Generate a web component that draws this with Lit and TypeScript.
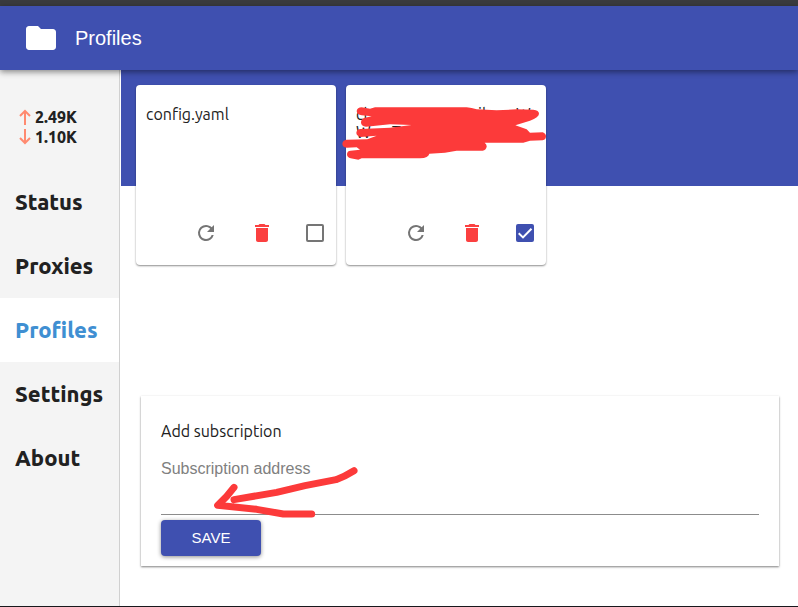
import { LitElement, html, css, svg } from "lit";
import { customElement, property, state } from "lit/decorators.js";
import { classMap } from "lit/directives/class-map.js";

const folderIcon = svg`<path d="M10 4H4C2.9 4 2 4.9 2 6V18C2 19.100 2.900 20 4 20H20C21.100 20 22 19.100 22 18V8C22 6.900 21.100 6 20 6H12L10 4Z"/>`;
const refreshIcon = svg`<path d="M17.650 6.350C16.200 4.900 14.210 4 12 4A8 8 0 1 0 19.730 14H17.650A6 6 0 1 1 12 6C13.660 6 15.140 6.690 16.220 7.780L13 11H20V4L17.650 6.350Z"/>`;
const trashIcon = svg`<path d="M6 19C6 20.100 6.900 21 8 21H16C17.100 21 18 20.100 18 19V7H6V19ZM19 4H15.500L14.500 3H9.500L8.500 4H5V6H19V4Z"/>`;

interface Profile {
  name: string;
  selected: boolean;
  hidden: boolean;
}

@customElement("profile-card")
export class ProfileCard extends LitElement {
  @property() name = "";
  @property({ type: Boolean }) selected = false;
  @property({ type: Boolean }) redacted = false;

  static styles = css`
    :host {
      display: flex;
      flex-direction: column;
      justify-content: space-between;
      position: relative;
      box-sizing: border-box;
      width: 200px;
      height: 180px;
      background: #fff;
      border-radius: 4px;
      box-shadow: 0 1px 2px rgba(0, 0, 0, 0.45);
    }
    .name {
      padding: 20px 10px 0;
      font-size: 16px;
      line-height: 18px;
    }
    .row {
      display: grid;
      grid-template-columns: 36px 86px 1fr 20px;
    }
    .actions {
      display: flex;
      align-items: center;
      justify-content: flex-end;
      gap: 32px;
      height: 24px;
      padding: 0 12px 20px;
    }
    button {
      display: flex;
      padding: 0;
      border: 0;
      background: none;
      color: #757575;
      cursor: pointer;
    }
    button svg {
      width: 24px;
      height: 24px;
      fill: currentColor;
    }
    .delete {
      color: #fb4040;
    }
    input {
      appearance: none;
      box-sizing: border-box;
      width: 18px;
      height: 18px;
      margin: 0;
      border: 2px solid #757575;
      border-radius: 2px;
    }
    .pick {
      display: grid;
      place-items: center;
      width: 18px;
    }
    .pick > * {
      grid-area: 1 / 1;
    }
    input:checked {
      border-color: #3f50b0;
      background: #3f50b0;
    }
    .tick {
      width: 18px;
      height: 18px;
      fill: none;
      stroke: #fff;
      stroke-width: 2;
      pointer-events: none;
    }
    .scribble {
      position: absolute;
      left: -16px;
      top: -10px;
      width: 230px;
      height: 110px;
      fill: #fc3a3a;
      pointer-events: none;
    }
  `;

  render() {
    return html`
      <div class="name">
        ${this.redacted
          ? html`<div class="row"><span>cl</span><span></span><span>il</span><span>W</span></div>
              <div class="row"><span>W</span><span>T</span></div>`
          : this.name}
      </div>
      <div class="actions">
        <button aria-label="Refresh"><svg viewBox="0 0 24 24">${refreshIcon}</svg></button>
        <button class="delete" aria-label="Delete"><svg viewBox="0 0 24 24">${trashIcon}</svg></button>
        <label class="pick">
          <input type="checkbox" aria-label="Use profile" .checked=${this.selected} />
          ${this.selected
            ? html`<svg class="tick" viewBox="0 0 18 18"><path d="M2.700 9.300 7 13.400 15.500 4.800" /></svg>`
            : null}
        </label>
      </div>
      ${this.redacted
        ? html`<svg class="scribble" viewBox="0 0 690 330">
            <path
              d="M80 108Q82 97 95 97L120 101 135 97H410Q425 98 440 103L500 106 560 103 610 104Q627 106 627 116Q627 126 600 137L556 151 590 163 600 173 638 172Q648 176 648 184Q648 194 638 196L600 197 580 203H464Q471 209 470 215Q468 225 458 227L380 227 345 233 298 236Q296 248 270 250L95 250 85 254 62 250Q51 247 51 238Q51 228 62 227L90 224 80 217 50 218Q37 216 37 206Q38 195 50 194L112 193 140 182 92 186Q79 182 79 173Q80 163 92 162L180 158 245 150 180 148 108 155Q94 153 93 143Q93 133 102 129L125 124 95 121Q81 119 80 108Z"
            />
          </svg>`
        : null}
    `;
  }
}

@customElement("app-root")
export class AppRoot extends LitElement {
  @state() page = "Profiles";
  @state() profiles: Profile[] = [
    { name: "config.yaml", selected: false, hidden: false },
    { name: "", selected: true, hidden: true },
  ];

  static styles = css`
    :host {
      display: flex;
      flex-direction: column;
      box-sizing: border-box;
      min-height: 100vh;
      border-top: 6px solid #3a3b3e;
      border-bottom: 1px solid #18181c;
      background: #fff;
      color: #212121;
      font-family: Ubuntu, "Noto Sans", sans-serif;
      font-size: 16px;
    }
    header {
      display: flex;
      align-items: center;
      gap: 16px;
      height: 64px;
      padding: 0 23px;
      background: #3f50b0;
      color: #fff;
      box-shadow: 0 2px 6px rgba(0, 0, 0, 0.45);
      z-index: 1;
    }
    header svg {
      width: 36px;
      height: 36px;
      fill: #fff;
    }
    h1 {
      margin: 0;
      font: 20px/24px "Liberation Sans", Arial, sans-serif;
    }
    .body {
      display: flex;
      flex: 1;
    }
    aside {
      flex: none;
      width: 119px;
      border-right: 1px solid #d0d0d0;
      background: #f4f4f4;
    }
    .traffic {
      padding: 37px 0 23px 19px;
      font-size: 16px;
      font-weight: 800;
      line-height: 20px;
    }
    .traffic div {
      display: flex;
      align-items: center;
      gap: 4px;
    }
    .traffic svg {
      width: 12px;
      height: 16px;
      fill: none;
      stroke: #ff8a70;
      stroke-width: 2;
    }
    nav a {
      display: block;
      padding-left: 15px;
      color: #212121;
      font-size: 22px;
      font-weight: 800;
      line-height: 64px;
      text-decoration: none;
    }
    nav a.active {
      background: #fff;
      color: #3f8fd2;
    }
    main {
      display: flex;
      flex: 1;
      flex-direction: column;
      gap: 20px;
      margin-left: 1px;
      background: linear-gradient(#3f50b0 116px, #fff 116px);
    }
    .cards {
      display: flex;
      flex-wrap: wrap;
      gap: 10px;
      padding: 15px;
    }
    form {
      position: relative;
      margin: auto 19px 40px 20px;
      padding: 20px 20px 10px;
      background: #fff;
      box-shadow: 0 1px 2px rgba(0, 0, 0, 0.5);
    }
    label {
      display: block;
      line-height: 30px;
    }
    input {
      display: block;
      box-sizing: border-box;
      width: 100%;
      height: 69px;
      margin: 0 0 5px;
      padding: 0 0 22px;
      border: 0;
      border-bottom: 1px solid #8c8c8c;
      border-radius: 0;
      background: none;
      font: 16px "Liberation Sans", Arial, sans-serif;
      outline: none;
    }
    input::placeholder {
      color: #808080;
    }
    form button {
      display: block;
      width: 100px;
      height: 36px;
      padding: 0 0 2px;
      border: 0;
      border-radius: 4px;
      background: #3f50b0;
      color: #fff;
      box-shadow: 0 1px 4px rgba(0, 0, 0, 0.45);
      font: 15px "Liberation Sans", Arial, sans-serif;
    }
    .arrow {
      position: absolute;
      left: -11px;
      top: -16px;
      width: 260px;
      height: 200px;
      fill: none;
      stroke: #fc3a3a;
      stroke-width: 21;
      stroke-linecap: round;
      stroke-linejoin: round;
      pointer-events: none;
    }
  `;

  render() {
    return html`
      <header>
        <svg viewBox="0 0 24 24">${folderIcon}</svg>
        <h1>${this.page}</h1>
      </header>
      <div class="body">
        <aside>
          <div class="traffic">
            <div><svg viewBox="0 0 12 16"><path d="M6 16V2M1 7l5-5 5 5" /></svg>2.49K</div>
            <div><svg viewBox="0 0 12 16"><path d="M6 0v14M1 9l5 5 5-5" /></svg>1.10K</div>
          </div>
          <nav>
            ${["Status", "Proxies", "Profiles", "Settings", "About"].map(
              (name) => html`<a
                href="#${name.toLowerCase()}"
                class=${classMap({ active: name === this.page })}
                @click=${() => (this.page = name)}
                >${name}</a
              >`
            )}
          </nav>
        </aside>
        <main>
          <div class="cards">
            ${this.profiles.map(
              (p) => html`<profile-card
                .name=${p.name}
                .selected=${p.selected}
                .redacted=${p.hidden}
              ></profile-card>`
            )}
          </div>
          <form @submit=${(e: Event) => e.preventDefault()}>
            <label for="address">Add subscription</label>
            <input id="address" type="text" placeholder="Subscription address" />
            <button type="submit">SAVE</button>
            <svg class="arrow" viewBox="0 0 780 600">
              <path d="M672 272Q645 289 618 299L525 317 440 337 312 359M312 322Q290 352 263 376L380 388 460 402H545" />
            </svg>
          </form>
        </main>
      </div>
    `;
  }
}
